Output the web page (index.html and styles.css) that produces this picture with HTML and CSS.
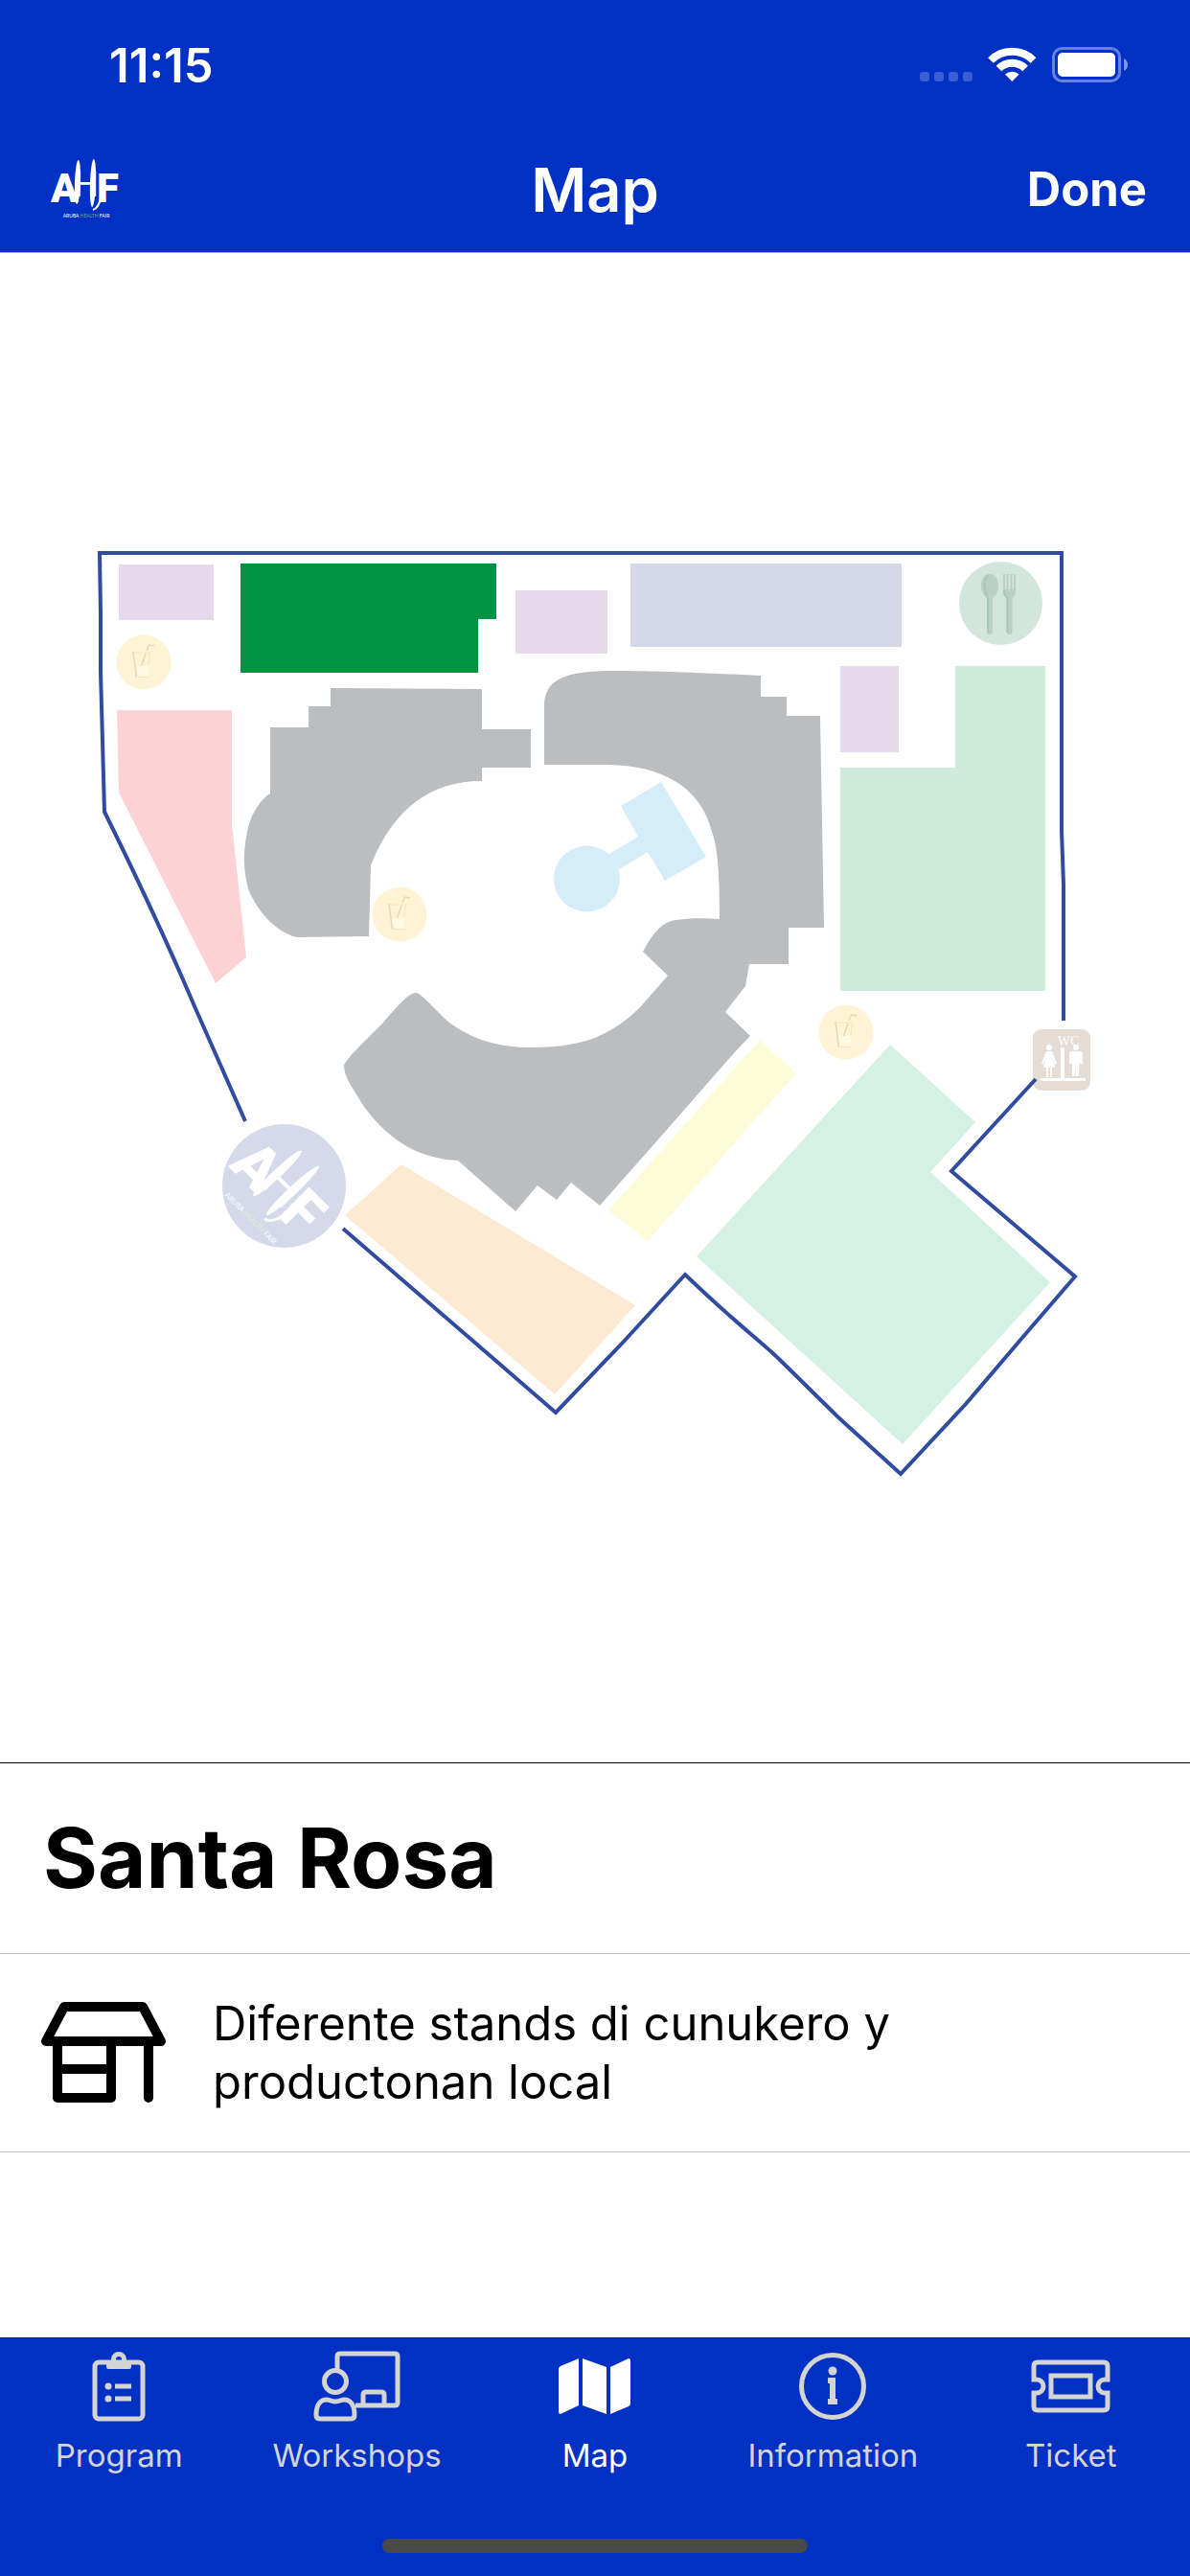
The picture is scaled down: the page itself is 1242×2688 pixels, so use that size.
FILE: index.html
```
<!DOCTYPE html>
<html lang="pap">
  <head>
    <meta charset="UTF-8" />
    <meta name="viewport" content="width=device-width, initial-scale=1.0" />
    <title>Map</title>
    <link rel="stylesheet" href="styles.css">
  </head>
  <body>
    <header class="header">
      <div class="status-bar">
        <span class="time">11:15</span>
        <svg class="status-icons" viewBox="0 0 218 38" aria-hidden="true">
          <g opacity="0.22">
            <rect x="0" y="26" width="10" height="10" rx="3" />
            <rect x="15" y="26" width="10" height="10" rx="3" />
            <rect x="30" y="26" width="10" height="10" rx="3" />
            <rect x="45" y="26" width="10" height="10" rx="3" />
          </g>
          <g fill="none" stroke="currentColor" stroke-width="8">
            <path d="M74 14A31.500 31.500 0 0 1 118.600 14" />
            <path d="M82.500 22.500A19.500 19.500 0 0 1 110.100 22.500" />
          </g>
          <path d="M96.300 36L89 28.500A11 11 0 0 1 103.600 28.500Z" />
          <rect x="139.500" y="1.500" width="69" height="34" rx="9" fill="none" stroke="currentColor" stroke-width="3" opacity="0.4" />
          <rect x="144" y="6" width="60" height="25" rx="5" />
          <path d="M213 12Q217 14 217 18.500T213 25Z" opacity="0.5" />
        </svg>
      </div>
      <div class="nav-bar">
        <a href="#" class="logo" aria-label="Aruba Health Fair">
          <svg viewBox="0 0 90 90">
            <g id="logo">
              <text class="logo-letter" x="8" y="58">A</text>
              <text class="logo-letter" x="56" y="58">F</text>
              <text class="logo-script" x="45" y="52">H</text>
              <!-- brush strokes -->
              <ellipse cx="36" cy="37" rx="3" ry="23" transform="rotate(2 36 37)" />
              <ellipse cx="52" cy="38" rx="3" ry="25" transform="rotate(2 52 38)" />
              <path d="M52 66Q58 64 60 54" fill="none" stroke="currentColor" stroke-width="2" />
              <text class="logo-caption" x="45" y="74">ARUBA <tspan class="logo-green">HEALTH</tspan> FAIR</text>
            </g>
          </svg>
        </a>
        <h1 class="title">Map</h1>
        <button class="done" type="button">Done</button>
      </div>
    </header>

    <main class="main">
      <div class="map">
        <svg viewBox="0 264 1242 1575" role="img" aria-label="Venue map">
          <defs>
            <g id="drink">
              <circle r="28.500" fill="#fff3d6" />
              <path d="M-8 4H6L4 15H-7Z" fill="#fff8e3" />
              <path d="M-11 -11L-7.500 15.500" stroke="#e6d8b5" stroke-width="1.500" />
              <path d="M-10 -10H6.500L5 3M-7 15.500H5" stroke="#f3e6c6" fill="none" />
              <path d="M-2.500 4L2 -9M3 -12L5.500 -18L11 -17" stroke="#e6d8b5" stroke-width="1.500" fill="none" />
            </g>
          </defs>

          <!-- stands -->
          <path class="zone-purple" d="M124 589H223V647H124ZM538 616H634V682H538ZM877 695H938V785H877Z" />
          <path class="zone-green" d="M251 588H518V646H499V702H251Z" />
          <path class="zone-blue" d="M658 588H941V675H658Z" />
          <path class="zone-mint" d="M997 695H1091V1034H877V801H997Z" />
          <path class="zone-red" d="M122 741H242V860L257 999L225 1026L124 827Z" />
          <path class="zone-orange" d="M419 1215L663 1362L579 1455L360 1268Z" />
          <path class="zone-yellow" d="M793 1085L831 1120L676 1295L635 1263Z" />
          <path class="zone-aqua" d="M929 1090L1018 1171L971 1223L1096 1338L942 1507L727 1311Z" />

          <!-- buildings -->
          <path class="building" d="M345 718L503 719V761H554V801H503V815C450 815 411 843 387 903L385 977L310 978C285 972 266 946 259 927C253 905 254 885 259 863C263 848 272 834 282 828V759H322V737H345Z" />
          <path class="building" d="M568 798V737C568 708 591 700 640 700C691 700 725 702 794 705V727H821V747H856L860 968H823V1006H782L778 1029L757 1056L783 1081C760 1104 740 1130 626 1258L596 1234L581 1252L561 1237L538 1264L478 1211C437 1209 406 1190 380 1155C370 1138 359 1125 359 1112C361 1105 381 1086 399 1068C415 1050 426 1036 434 1036C440 1036 455 1055 469 1067C495 1086 521 1093 557 1093C610 1093 640 1079 669 1050L697 1018L671 993Q687 961 706 960C718 958 735 958 751 959C751 918 750 887 743 868C731 820 690 799 635 798Z" />
          <path class="pool" d="M690 816L737 894L694 919L676 889L646 907L636 891L666 873L648 841Z" />
          <circle class="pool" cx="612.500" cy="917" r="34.500" />

          <!-- fence -->
          <path class="fence" d="M256 1170L203 1050C175 984 140 910 109 847L105 700V640L104 577H1108V867L1110 923V1065" />
          <use href="#drink" x="150" y="691" />
          <use href="#drink" x="417" y="954" />
          <use href="#drink" x="883" y="1077" />

          <!-- food court -->
          <circle cx="1044.500" cy="629.500" r="43.500" fill="#d3e6de" />
          <g fill="#b9d0c5">
            <path d="M1033 599C1039 599 1042 605 1042 611C1042 618 1039 622 1036 624V659Q1036 662 1033 662T1030 659V624C1027 622 1024 618 1024 611C1024 605 1027 599 1033 599Z" />
            <path d="M1047 599H1049V615H1050.500V599H1052.500V615H1054.500V599H1056.500V615H1058V599H1060V616C1060 621 1058 623 1056.500 624V659Q1056.500 662 1053.500 662T1050.500 659V624C1049 623 1047 621 1047 616Z" />
          </g>
          <path d="M1031 600C1026 605 1027 617 1031 623V660M1048 616Q1048 621 1051.500 624V660" fill="none" stroke="#abc5b8" stroke-width="2" />

          <!-- toilets -->
          <rect x="1078" y="1074" width="60" height="64" rx="9" fill="#e5dcd6" />
          <g fill="#fff">
            <text class="wc" x="1115" y="1091">WC</text>
            <rect x="1107" y="1093" width="4" height="33" />
            <rect x="1086" y="1125" width="47" height="3" />
            <circle cx="1095" cy="1093" r="3" />
            <path d="M1092 1097H1098L1103 1110L1101 1111L1098 1103L1101 1114H1098V1124H1096V1114H1094V1124H1092V1114H1089L1092 1103L1089 1111L1087 1110Z" />
            <circle cx="1123" cy="1093" r="3" />
            <path d="M1119 1097H1127Q1130 1097 1130 1100V1110H1127V1102L1126 1123H1123V1110L1122 1123H1119V1102V1110H1116V1100Q1116 1097 1119 1097Z" />
          </g>
          <path class="fence" d="M1081 1126L993 1222L1122 1332L1072 1390L1008 1465L940 1538L875 1479L815 1420C795 1400 770 1383 715 1330L649 1402L580 1474L358 1282" />

          <!-- entrance -->
          <circle class="entrance" cx="296.500" cy="1237.500" r="64.500" />
          <use class="entrance-logo" href="#logo" transform="translate(296 1237) rotate(45) scale(1.500) translate(-45 -40)" />
        </svg>
      </div>

      <section class="details">
        <h2 class="details-heading">Santa Rosa</h2>
        <div class="details-row">
          <svg class="stand-icon" viewBox="0 0 132 106" aria-hidden="true">
            <path d="M25 5H107L126 41H6ZM18 41V100H74V41M18 70H74M113 41V100" />
          </svg>
          <p class="details-text">Diferente stands di cunukero y productonan local</p>
        </div>
      </section>
    </main>

    <footer class="footer">
      <nav class="tabs">
        <a href="#" class="tab">
          <svg class="tab-icon" viewBox="0 0 96 84">
            <rect x="23" y="17" width="50" height="59" rx="4" />
            <circle cx="48" cy="14" r="5.500" />
            <path class="solid" d="M35 17H61V22Q61 24 59 24H37Q35 24 35 22Z" />
            <path d="M44 42H61M44 55H61" />
            <circle class="solid" cx="37" cy="42" r="3.500" />
            <circle class="solid" cx="37" cy="55" r="3.500" />
          </svg>
          Program
        </a>
        <a href="#" class="tab">
          <svg class="tab-icon" viewBox="0 0 96 84">
            <path d="M27 25V11Q27 8 30 8H87Q90 8 90 11V59Q90 62 87 62H46" />
            <path d="M54 61V51Q54 48 57 48H73Q76 48 76 51V61" />
            <ellipse cx="25" cy="37" rx="11.500" ry="11.500" />
            <path d="M5 72C5 62 9 56 16 56C19 56 20 58 25 58S31 56 34 56C41 56 45 62 45 72Q45 76 41 76H9Q5 76 5 72Z" />
          </svg>
          Workshops
        </a>
        <a href="#" class="tab active" aria-current="page">
          <svg class="tab-icon" viewBox="0 0 96 84">
            <path class="solid" d="M12 21L31 13V62L12 71Q10 71 10 69V24Q10 22 12 21ZM35 13L60 22V71L35 62ZM64 22L83 13Q85 13 85 15V60Q85 62 83 63L64 71Z" />
          </svg>
          Map
        </a>
        <a href="#" class="tab">
          <svg class="tab-icon" viewBox="0 0 96 84">
            <circle cx="48" cy="42" r="32.500" />
            <circle class="solid" cx="48" cy="26" r="4.500" />
            <path class="info-stem" d="M43 36H48V58M43 58H53" />
          </svg>
          Information
        </a>
        <a href="#" class="tab">
          <svg class="tab-icon" viewBox="0 0 96 84">
            <path d="M9 21Q9 17 13 17H82Q86 17 86 21V35H83A7 7 0 0 0 83 49H86V63Q86 67 82 67H13Q9 67 9 63V49H12A7 7 0 0 0 12 35H9Z" />
            <rect x="27" y="31" width="41" height="22" />
          </svg>
          Ticket
        </a>
      </nav>
      <div class="home-indicator"></div>
    </footer>
  </body>
</html>
```
FILE: styles.css
```
* {
  box-sizing: border-box;
}
body {
  margin: 0;
  min-height: 100vh;
  display: flex;
  flex-direction: column;
  background-color: white;
  color: black;
  font-family: Inter, Roboto, sans-serif;
}

.header {
  background-color: #0030c4;
  color: white;
  border-bottom: 1px solid #a8a8ad;
}
.status-bar {
  display: flex;
  justify-content: space-between;
  align-items: center;
  height: 132px;
  padding: 4px 64px 0 114px;
}
.time {
  font-size: 49px;
  font-weight: 600;
}
.status-icons {
  width: 218px;
  fill: currentColor;
}
.nav-bar {
  display: grid;
  grid-template-columns: 1fr auto 1fr;
  align-items: center;
  height: 131px;
  padding: 0 45px;
}
.logo {
  justify-self: start;
  width: 90px;
  height: 90px;
  color: white;
  --green: #6cab5c;
}
.logo svg {
  display: block;
  fill: currentColor;
}
.logo-letter {
  font-family: Roboto, sans-serif;
  font-size: 42px;
  font-weight: 900;
}
.logo-script {
  font-family: Roboto, sans-serif;
  font-size: 36px;
  font-weight: 400;
  text-anchor: middle;
}
.logo-caption {
  font-family: Lato, sans-serif;
  font-size: 5px;
  text-anchor: middle;
}
.logo-green {
  fill: var(--green);
}
.title {
  margin: 0;
  font-size: 63px;
  font-weight: 600;
}
.done {
  justify-self: end;
  background: none;
  border: none;
  padding: 0;
  color: inherit;
  font-family: inherit;
  font-size: 49px;
  font-weight: 700;
  cursor: pointer;
}

.main {
  flex: 1;
  display: flex;
  flex-direction: column;
}
.map {
  flex: 1;
  display: flex;
  align-items: center;
}
.map svg {
  display: block;
  width: 100%;
}
.zone-purple {
  fill: #e6d9eb;
}
.zone-green {
  fill: #009344;
}
.zone-blue {
  fill: #d5d8e9;
}
.zone-mint {
  fill: #cdeadb;
}
.zone-red {
  fill: #fcd2d4;
}
.zone-orange {
  fill: #fee9d3;
}
.zone-yellow {
  fill: #fefcd8;
}
.zone-aqua {
  fill: #d5f1e4;
}
.building {
  fill: #bcbdbf;
}
.pool {
  fill: #d4edf9;
}
.fence {
  fill: none;
  stroke: #304b9f;
  stroke-width: 4px;
}
.wc {
  font-family: "Liberation Serif", serif;
  font-size: 14px;
  text-anchor: middle;
}
.entrance {
  fill: #d5daeb;
}
.entrance-logo {
  fill: white;
  color: white;
  --green: #e3efd5;
}

.details {
  border-top: 1px solid black;
  padding-bottom: 193px;
}
.details-heading {
  margin: 0;
  padding: 45px;
  font-size: 87px;
  line-height: 108px;
  font-weight: 700;
  border-bottom: 1px solid #bfbfbf;
}
.details-row {
  display: flex;
  align-items: center;
  gap: 48px;
  padding: 42px;
  border-bottom: 1px solid #bfbfbf;
}
.stand-icon {
  flex: none;
  width: 132px;
  fill: none;
  stroke: currentColor;
  stroke-width: 10px;
  stroke-linecap: round;
  stroke-linejoin: round;
}
.details-text {
  margin: 0;
  max-width: 800px;
  font-size: 49px;
  line-height: 61px;
}

.footer {
  background-color: #0030c4;
  border-top: 1px solid #00228c;
  padding-bottom: 24px;
}
.tabs {
  display: grid;
  grid-template-columns: repeat(5, 1fr);
  height: 209px;
  padding-top: 8px;
}
.tab {
  display: flex;
  flex-direction: column;
  align-items: center;
  gap: 8px;
  color: #d4d4d4;
  font-size: 33px;
  line-height: 44px;
  text-decoration: none;
}
.tab.active {
  color: white;
}
.tab-icon {
  width: 96px;
  height: 84px;
  fill: none;
  stroke: currentColor;
  stroke-width: 5px;
}
.tab-icon .solid {
  fill: currentColor;
  stroke: none;
}
.tab-icon .info-stem {
  stroke-width: 6px;
}
.home-indicator {
  width: 444px;
  height: 15px;
  margin: 0 auto;
  border-radius: 8px;
  background-color: #494949;
}
```
